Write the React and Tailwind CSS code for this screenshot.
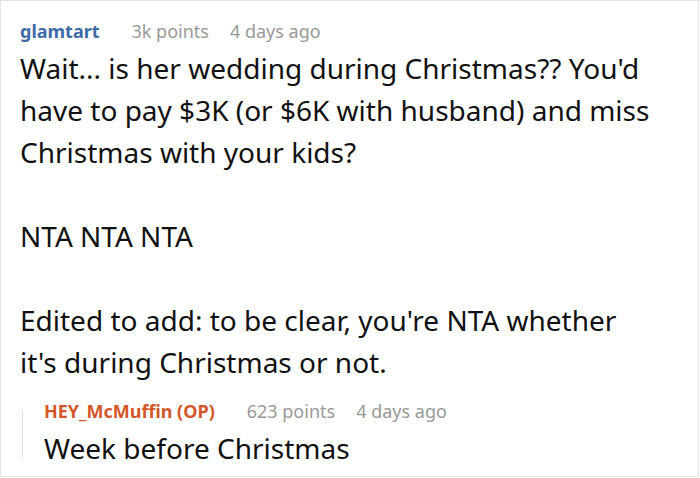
import React from 'react';

const font = { fontFamily: '"Noto Sans", "Open Sans", sans-serif' };

const Meta = ({ author, authorClass, points, ago }) => (
    <div className="flex items-center text-[18px] leading-[24px]">
        <span className={`font-bold ${authorClass}`}>{author}</span>
        <span className="ml-[32px] text-[#999999]">{points}</span>
        <span className="ml-[21px] text-[#999999]">{ago}</span>
    </div>
);

const App = () => {
    return (
        <div className="w-[700px] h-[478px] bg-white" style={font}>
            <div className="w-[699px] h-[477px] border border-[#e4e4e4] pl-[19px] pt-[18px]">
                {/* Parent comment */}
                <Meta author="glamtart" authorClass="text-[#3e6aa8]" points="3k points" ago="4 days ago" />
                <div className="mt-[4px] text-[28px] leading-[42px] text-[#111111] whitespace-pre-line pr-[38px]">
                    {"Wait... is her wedding during Christmas?? You'd have to pay $3K (or $6K with husband) and miss Christmas with your kids?\n\nNTA NTA NTA\n\nEdited to add: to be clear, you're NTA whether it's during Christmas or not."}
                </div>

                {/* Reply */}
                <div className="flex mt-[16px] ml-[2px]">
                    <div className="w-px bg-[#e4e4e4] my-[11px] shrink-0" />
                    <div className="pl-[21px]">
                        <Meta author="HEY_McMuffin (OP)" authorClass="text-[#d4572a]" points="623 points" ago="4 days ago" />
                        <div className="mt-[4px] text-[28px] leading-[42px] text-[#111111]">Week before Christmas</div>
                    </div>
                </div>
            </div>
        </div>
    );
};

export default App;
